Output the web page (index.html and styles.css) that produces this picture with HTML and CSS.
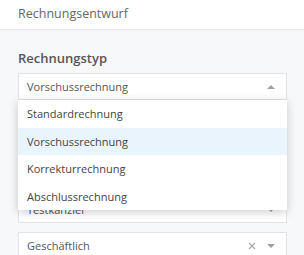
FILE: index.html
```html
<!DOCTYPE html>
<html lang="de">
<head>
    <meta charset="UTF-8">
    <meta name="viewport" content="width=device-width, initial-scale=1.0">
    <title>Rechnungsentwurf</title>

    <link rel="stylesheet" href="styles.css">
</head>
<body>
    <div class="header">Rechnungsentwurf</div>

    <div class="content">
        <div class="section">
            <h2>Rechnungstyp</h2>
            <div class="field open">
                <div class="select">
                    <span class="value">Vorschussrechnung</span>
                    <span class="arrow-up"></span>
                </div>
                <ul class="menu">
                    <li>Standardrechnung</li>
                    <li class="active">Vorschussrechnung</li>
                    <li>Korrekturrechnung</li>
                    <li>Abschlussrechnung</li>
                </ul>
            </div>
        </div>

        <div class="section sender">
            <div class="field">
                <div class="select">
                    <span class="value">Testkanzlei</span>
                    <span class="arrow-down"></span>
                </div>
            </div>
            <div class="field">
                <div class="select">
                    <span class="value">Geschäftlich</span>
                    <svg class="clear" width="8" height="8" viewBox="0 0 8 8">
                        <path d="M1 1 L7 7 M7 1 L1 7" stroke="#a8a8a8" stroke-width="1.2"/>
                    </svg>
                    <span class="arrow-down"></span>
                </div>
            </div>
        </div>
    </div>
</body>
</html>
```

FILE: styles.css
```css
* {
    box-sizing: border-box;
    font-family: "Open Sans", "Liberation Sans", sans-serif;
}

body {
    margin: 0;
    background-color: #f7f8fa;
}

.header {
    height: 30px;
    line-height: 27px;
    padding-left: 18px;
    background-color: #fff;
    border-bottom: 1px solid #e2e4e8;
    font-size: 12.5px;
    color: #666;
}

.content {
    padding: 18px 17px 0 18px;
}

/* the dropdown menu covers the top of this block */
.sender {
    margin-top: 96px;
}

h2 {
    margin: 0 0 5px 0;
    font-size: 13px;
    line-height: 20px;
    font-weight: 600;
    color: #555;
}

.field {
    position: relative;
}

.field + .field {
    margin-top: 9px;
}

.select {
    display: flex;
    align-items: center;
    height: 27px;
    padding: 0 8px;
    background-color: #fff;
    border: 1px solid #e1e3e6;
    font-size: 11px;
    color: #555;
}

.value {
    flex: 1;
}

.arrow-up,
.arrow-down {
    width: 0;
    height: 0;
    margin-right: 3px;
    border-left: 4px solid transparent;
    border-right: 4px solid transparent;
}

.arrow-up {
    border-bottom: 4px solid #a0a0a0;
}

.arrow-down {
    border-top: 4px solid #a0a0a0;
}

.clear {
    margin-right: 11px;
}

.menu {
    position: absolute;
    top: 100%;
    left: 0;
    right: 0;
    z-index: 10;
    margin: 0;
    padding: 0;
    list-style: none;
    background-color: #fff;
    box-shadow: 0 2px 9px rgba(0, 0, 0, 0.2);
}

.menu li {
    height: 27.5px;
    line-height: 27.5px;
    padding-left: 9px;
    font-size: 11px;
    color: #444;
}

.menu li.active {
    background-color: #eaf4fd;
}
```
